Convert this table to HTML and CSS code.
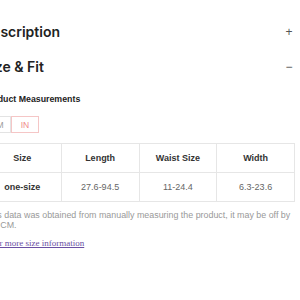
FILE: index.html
```html
<!DOCTYPE html>
<html>
<head>
<meta charset="utf-8">
<link rel="stylesheet" href="styles.css">
</head>
<body>
<div class="page">
  <div class="acc-head">
    <span class="acc-title">Description</span>
    <span class="acc-icon">+</span>
  </div>
  <div class="acc-head">
    <span class="acc-title">Size &amp; Fit</span>
    <span class="acc-icon">−</span>
  </div>
  <div class="acc-body">
    <div class="meas-title">Product Measurements</div>
    <div class="units">
      <span class="unit">CM</span>
      <span class="unit active">IN</span>
    </div>
    <table class="size-table">
      <tr><th>Size</th><th>Length</th><th>Waist Size</th><th>Width</th></tr>
      <tr><td class="first">one-size</td><td>27.6-94.5</td><td>11-24.4</td><td>6.3-23.6</td></tr>
    </table>
    <p class="note">This data was obtained from manually measuring the product, it may be off by 1-2 CM.</p>
    <a class="more" href="#">For more size information</a>
  </div>
</div>
</body>
</html>
```
FILE: styles.css
```css
html, body {
  margin: 0;
  padding: 0;
  background: #fff;
  overflow: hidden;
}
.page {
  margin-left: -17px;
  width: 312px;
  padding-top: 14px;
}
.acc-head {
  display: flex;
  justify-content: space-between;
  align-items: center;
  height: 35px;
}
.acc-title {
  font-family: "Inter", "DejaVu Sans", sans-serif;
  font-weight: 600;
  font-size: 14px;
  color: #222;
  margin-left: -1px;
}
.acc-icon {
  font-family: "Liberation Sans", Arial, sans-serif;
  font-size: 12px;
  color: #555;
  width: 12px;
  text-align: center;
}
.acc-body {
  padding-top: 9px;
}
.meas-title {
  font-family: "Liberation Sans", Arial, sans-serif;
  font-weight: bold;
  font-size: 8.8px;
  color: #222;
  line-height: 12px;
}
.units {
  display: flex;
  margin-top: 11px;
}
.unit {
  width: 26px;
  height: 15px;
  border: 1px solid #e3e3e3;
  display: flex;
  align-items: center;
  justify-content: center;
  font-family: "Liberation Sans", Arial, sans-serif;
  font-size: 8.5px;
  color: #999;
}
.unit.active {
  border-color: #f5c6c6;
  color: #f08a8a;
}
.size-table {
  margin-top: 10px;
  width: 312px;
  border-collapse: collapse;
  table-layout: fixed;
  font-family: "Liberation Sans", Arial, sans-serif;
  font-size: 9px;
}
.size-table th, .size-table td {
  border: 1px solid #e6e6e6;
  height: 28px;
  padding: 0;
  text-align: center;
  color: #333;
}
.size-table th {
  font-weight: bold;
}
.size-table td {
  color: #666;
}
.size-table td.first {
  font-weight: bold;
  color: #333;
}
.note {
  margin: 8px 0 0;
  font-family: "Liberation Sans", Arial, sans-serif;
  font-size: 8.9px;
  line-height: 10px;
  color: #999;
  padding-left: 2px;
}
.more {
  display: inline-block;
  margin-top: 8px;
  margin-left: 7px;
  font-family: "Liberation Serif", "Times New Roman", serif;
  font-size: 9px;
  color: #6a4fa3;
}
```
